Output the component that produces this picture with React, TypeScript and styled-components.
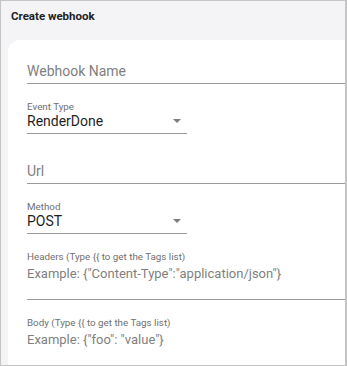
import styled, { createGlobalStyle } from 'styled-components'

const GlobalStyle = createGlobalStyle`
  html, body {
    margin: 0;
    padding: 0;
    background: #ffffff;
  }
  * {
    box-sizing: border-box;
  }
`

const Frame = styled.div`
  width: 347px;
  height: 366px;
  border: 1px solid #c4c4c4;
  border-right-width: 2px;
  background-color: #f4f4f6;
  overflow: hidden;
  display: flex;
  flex-direction: column;
  font-family: Roboto, 'Liberation Sans', sans-serif;
`

const DialogHeader = styled.div`
  height: 39px;
  flex-shrink: 0;
  padding: 8px 0 0 10px;
  font-size: 11.5px;
  font-weight: 700;
  line-height: 14px;
  color: #222222;
`

const Card = styled.div`
  flex: 1;
  margin-left: 7px;
  width: 360px;
  background-color: #ffffff;
  border-top-left-radius: 12px;
  padding: 10px 0 0 19px;
  display: flex;
  flex-direction: column;
  gap: 16px;
`

const Field = styled.div<{ $width?: number }>`
  display: flex;
  flex-direction: column;
  width: ${(p) => (p.$width ? `${p.$width}px` : '100%')};
`

const Label = styled.div`
  height: 13px;
  font-size: 9.8px;
  line-height: 13px;
  color: #707070;
  white-space: nowrap;
`

const InputBox = styled.div<{ $rows?: number; $small?: boolean }>`
  display: flex;
  align-items: flex-start;
  min-height: ${(p) => (p.$rows ? `${p.$rows}px` : '20px')};
  padding: ${(p) => (p.$small ? '2px 0 3px' : '0 0 3px')};
  border-bottom: 1px solid #9a9a9a;
  font-size: ${(p) => (p.$small ? '13px' : '14px')};
  line-height: 17px;
`

const Placeholder = styled.span`
  color: #7f7f7f;
  white-space: nowrap;
`

const Value = styled.span`
  color: #1f1f1f;
  flex: 1;
`

const Arrow = styled.span`
  width: 0;
  height: 0;
  margin: 6px 6px 0 0;
  border-left: 4px solid transparent;
  border-right: 4px solid transparent;
  border-top: 4px solid #7d7d7d;
`

function TextInput({ label, placeholder, rows }: { label?: string; placeholder: string; rows?: number }) {
  return (
    <Field>
      <Label>{label}</Label>
      <InputBox $rows={rows} $small={!!rows}>
        <Placeholder>{placeholder}</Placeholder>
      </InputBox>
    </Field>
  )
}

function SelectInput({ label, value }: { label: string; value: string }) {
  return (
    <Field $width={160}>
      <Label>{label}</Label>
      <InputBox>
        <Value>{value}</Value>
        <Arrow />
      </InputBox>
    </Field>
  )
}

export default function App() {
  return (
    <>
      <GlobalStyle />
      <Frame>
        <DialogHeader>Create webhook</DialogHeader>
        <Card>
          <TextInput placeholder="Webhook Name" />
          <SelectInput label="Event Type" value="RenderDone" />
          <TextInput placeholder="Url" />
          <SelectInput label="Method" value="POST" />
          <TextInput
            label="Headers (Type {{ to get the Tags list)"
            placeholder='Example: {"Content-Type":"application/json"}'
            rows={37}
          />
          <TextInput label="Body (Type {{ to get the Tags list)" placeholder='Example: {"foo": "value"}' rows={37} />
        </Card>
      </Frame>
    </>
  )
}
